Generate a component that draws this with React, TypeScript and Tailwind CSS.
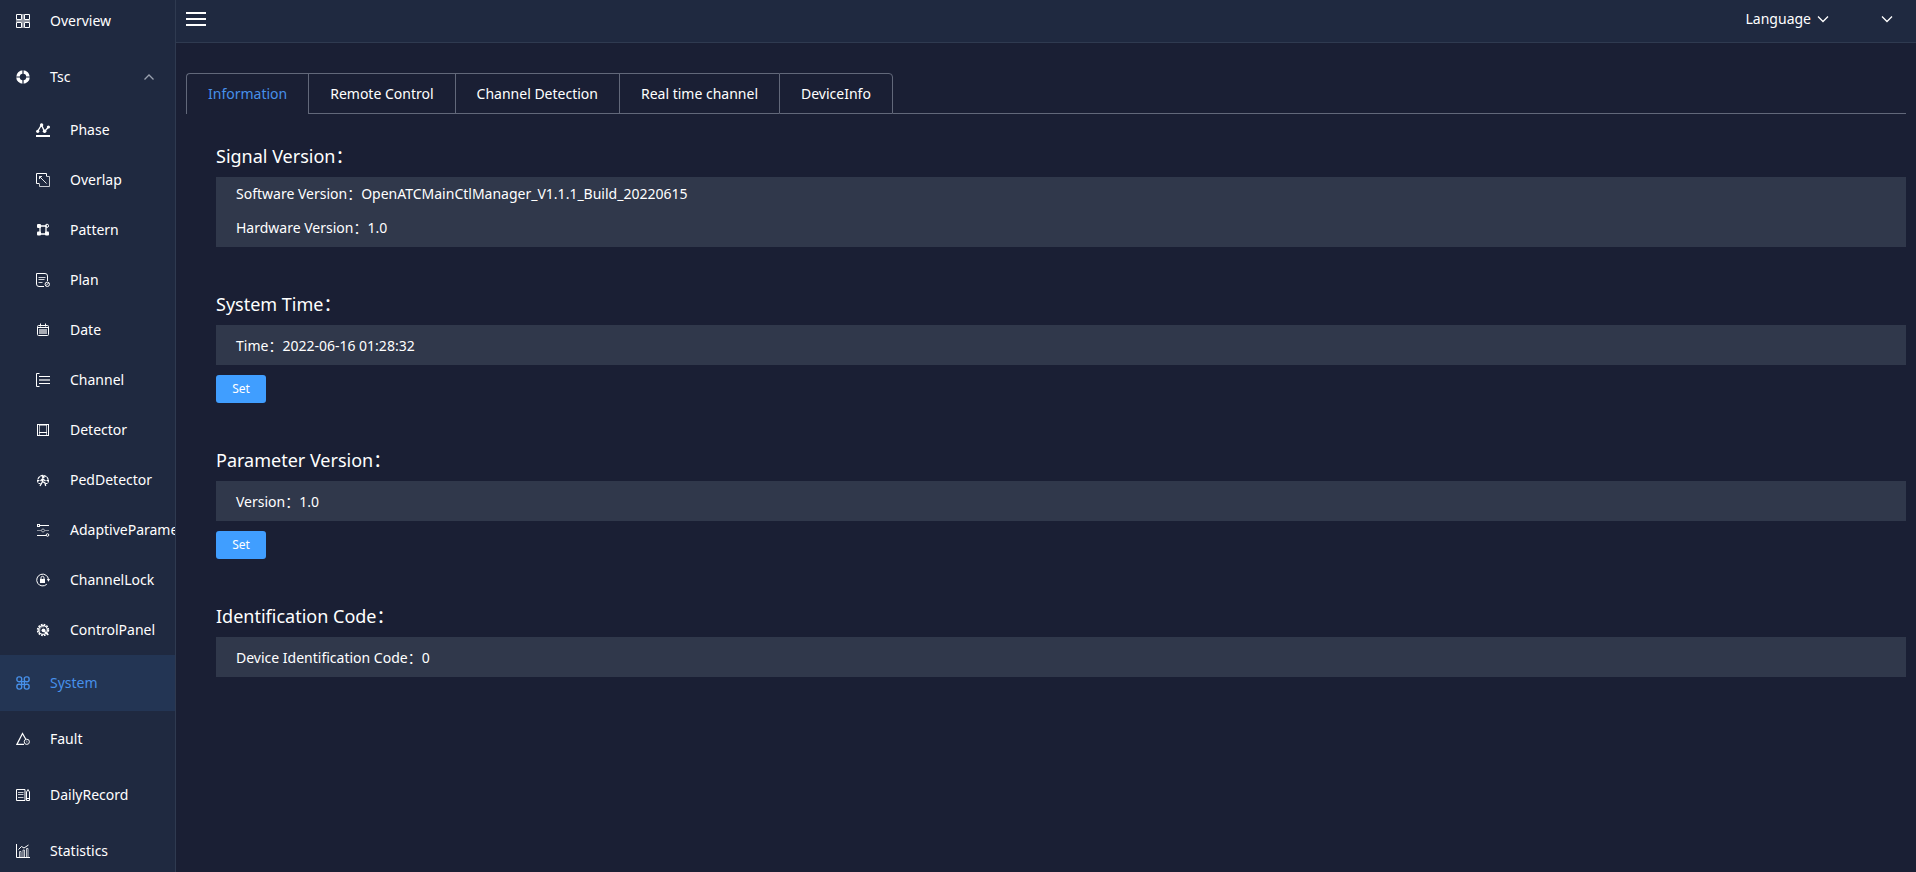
import { useState } from "react";
import type { ReactNode } from "react";
import { clsx } from "clsx";

const Icon = ({ children }: { children: ReactNode }) => (
  <svg
    viewBox="0 0 14 14"
    fill="none"
    stroke="currentColor"
    strokeWidth="1"
    className="h-[14px] w-[14px] shrink-0"
    aria-hidden="true"
  >
    {children}
  </svg>
);

const ChevronIcon = ({ up, className }: { up?: boolean; className?: string }) => (
  <svg
    viewBox="0 0 12 12"
    fill="none"
    stroke="currentColor"
    strokeWidth="1.3"
    className={clsx("h-3 w-3 shrink-0", className)}
    aria-hidden="true"
  >
    <path d={up ? "M1.5 8.5 6 4l4.5 4.5" : "M1 3.500 6 8.500l5-5"} />
  </svg>
);

const icons = {
  overview: (
    <Icon>
      <path d="M.5.5h5v5h-5zM8.500.5h5v5h-5zM.5 8.500h5v5h-5zM8.500 8.500h5v5h-5z" />
      <path d="M7 0v14M0 7h14" strokeWidth="2" opacity=".5" />
    </Icon>
  ),
  tsc: (
    <Icon>
      <circle cx="7" cy="7" r="5" strokeWidth="3.600" />
      <path d="M7 0v4M7 10v4M0 7h4M10 7h4" stroke="#1f2940" strokeWidth="1.200" />
    </Icon>
  ),
  phase: (
    <Icon>
      <path d="M0 13h14" strokeWidth="2" />
      <path d="M1.500 8.500 5.500 2l3 6.500 4-4.500" strokeWidth="1.400" />
      <g fill="currentColor" stroke="none">
        <circle cx="1.700" cy="8.300" r="1.600" />
        <circle cx="5.600" cy="2" r="1.700" />
        <circle cx="8.600" cy="8.300" r="1.800" />
        <circle cx="12.400" cy="4" r="1.600" />
      </g>
    </Icon>
  ),
  overlap: (
    <Icon>
      <path d="M3.500 10.500h-3V.5h10v3" />
      <path d="M11 3.500h2.500v10h-10V11" opacity=".75" />
      <path d="M3.500 3.500 10.500 10.500M3.500 6V3.500H6" opacity=".9" />
    </Icon>
  ),
  pattern: (
    <Icon>
      <path d="M3 3h8M3 11h8M4 3v8M10 3v8" strokeWidth="1.300" />
      <g fill="currentColor" stroke="none">
        <rect x="1" y="1" width="4" height="4" rx="1" />
        <rect x="1" y="8.500" width="4" height="4" rx="1" />
        <rect x="9" y="8.500" width="4" height="4" rx="1" />
      </g>
      <circle cx="11" cy="2.800" r="1.600" />
    </Icon>
  ),
  plan: (
    <Icon>
      <path d="M8 13.500H3A2.500 2.500 0 0 1 .5 11V.5H9A2.500 2.500 0 0 1 11.500 3v5" />
      <path d="M2.500 4.500h7M2.500 6.500h6M2.500 9.500h4" opacity=".8" />
      <circle cx="11.300" cy="11.300" r="2.200" />
      <path d="m10 12.500 2.500-2.500" />
    </Icon>
  ),
  date: (
    <Icon>
      <rect x="1.500" y="2.500" width="11" height="10" rx="1" />
      <path d="M1.500 4.500h11M4.500.5v3M9.500.5v3" />
      <rect x="3" y="6" width="8" height="5" fill="currentColor" stroke="none" opacity=".6" />
    </Icon>
  ),
  channel: (
    <Icon>
      <path d="M3.500.5h-3v13h3M3 3.500h11M3 10.500h11" />
      <path d="M3 7h11" strokeWidth="2" opacity=".6" />
    </Icon>
  ),
  detector: (
    <Icon>
      <rect x="1.500" y="1.500" width="11" height="11" />
      <path d="M3.500 1.500v11M10.500 1.500v11" opacity=".65" />
      <path d="M3 2.500h8" opacity=".5" />
      <path d="M3 9.500h8" />
    </Icon>
  ),
  pedDetector: (
    <Icon>
      <path d="M2 9.500A5.300 5.300 0 1 1 12 9.500" strokeWidth="1.200" strokeDasharray="3 .6" />
      <circle cx="7.300" cy="4" r="1.400" fill="currentColor" stroke="none" />
      <path
        d="M7 5.500 6.300 9 4 13M6.500 8.500l2.500 1.500.7 3M4.500 8 6.500 5.800 9.500 8"
        strokeWidth="1.300"
      />
      <path d="M1 7.500h2.500M10.500 7.500H13M2.500 10.500h2M9.500 10.500h2" />
    </Icon>
  ),
  adaptive: (
    <Icon>
      <path d="M4 2.500h9M1 12.500h9" />
      <path d="M1 7.500h4M9 7.500h4" opacity=".5" />
      <rect x="1.500" y="1.500" width="2" height="2" />
      <circle cx="7" cy="7.500" r="1.500" opacity=".6" />
      <circle cx="11.500" cy="12" r="1.300" />
    </Icon>
  ),
  channelLock: (
    <Icon>
      <path d="M12.500 6.500A5.900 5.900 0 1 0 10.800 11.200" />
      <path d="M10.800 6h3.200L12.500 8.800z" fill="currentColor" stroke="none" />
      <rect x="4" y="6" width="5" height="4" fill="currentColor" stroke="none" />
      <path d="M5 6V4.800a1.500 1.500 0 0 1 3 0V6" />
    </Icon>
  ),
  controlPanel: (
    <Icon>
      <circle cx="7" cy="7" r="5.400" strokeWidth="1.600" strokeDasharray="1.700 1.130" />
      <circle cx="7" cy="7" r="4.300" strokeWidth="1.200" />
      <path d="M4 8.500A3.200 3.200 0 0 1 8 4" strokeWidth="1.200" opacity=".5" />
      <circle cx="7.500" cy="7.300" r="1.900" fill="currentColor" stroke="none" />
      <path d="m8 8 4.300 4" strokeWidth="1.600" />
    </Icon>
  ),
  system: (
    <Icon>
      <g strokeWidth="1.400">
        <rect x=".9" y=".9" width="4.800" height="4.800" rx="2" />
        <rect x="8.300" y=".9" width="4.800" height="4.800" rx="2" />
        <rect x=".9" y="8.300" width="4.800" height="4.800" rx="2" />
        <rect x="8.300" y="8.300" width="4.800" height="4.800" rx="2" />
      </g>
      <path d="M5.500 4v6M8.500 4v6M4 5.500h6M4 8.500h6" />
      <path d="M7 5v4" strokeWidth="2" opacity=".4" />
    </Icon>
  ),
  fault: (
    <Icon>
      <path d="M8 12.400H.9L6.500 1.500l3.300 5.800" strokeWidth="1.200" />
      <circle cx="10.800" cy="9.800" r="2.600" />
      <path d="M10.800 8.500v2" opacity=".6" />
    </Icon>
  ),
  dailyRecord: (
    <Icon>
      <path d="M9 1.500H.5v11H9z" />
      <path d="M2 4.500h5.500M2 6.500h5.500M2 9.500h5.500" opacity=".75" />
      <path d="M10.500 12.500V4L12 1.500 13.500 4v8.500zM10.500 10.500h3" />
    </Icon>
  ),
  statistics: (
    <Icon>
      <path d="M.5 0v13.500H14" />
      <path d="M3.500 13V7.500H5V13M7 13V6h1.500v7M10.500 13V4.500H12V13" opacity=".75" />
      <path d="M2.500 5.500 5.500 2.500 8 4l4.500-3" />
    </Icon>
  ),
};

const tscLinks = [
  { name: "Phase", icon: icons.phase },
  { name: "Overlap", icon: icons.overlap },
  { name: "Pattern", icon: icons.pattern },
  { name: "Plan", icon: icons.plan },
  { name: "Date", icon: icons.date },
  { name: "Channel", icon: icons.channel },
  { name: "Detector", icon: icons.detector },
  { name: "PedDetector", icon: icons.pedDetector },
  { name: "AdaptiveParameter", icon: icons.adaptive },
  { name: "ChannelLock", icon: icons.channelLock },
  { name: "ControlPanel", icon: icons.controlPanel },
];

const bottomLinks = [
  { name: "System", icon: icons.system, active: true },
  { name: "Fault", icon: icons.fault },
  { name: "DailyRecord", icon: icons.dailyRecord },
  { name: "Statistics", icon: icons.statistics },
];

const tabs = ["Information", "Remote Control", "Channel Detection", "Real time channel", "DeviceInfo"];

const sections = [
  {
    title: "Signal Version：",
    rows: ["Software Version：OpenATCMainCtlManager_V1.1.1_Build_20220615", "Hardware Version：1.0"],
  },
  { title: "System Time：", rows: ["Time：2022-06-16 01:28:32"], action: true },
  { title: "Parameter Version：", rows: ["Version：1.0"], action: true },
  { title: "Identification Code：", rows: ["Device Identification Code：0"] },
];

type NavLinkProps = {
  name: string;
  icon: ReactNode;
  active?: boolean;
  nested?: boolean;
};

const NavLink = ({ name, icon, active, nested }: NavLinkProps) => (
  <a
    href="#"
    className={clsx(
      "flex items-center gap-5 whitespace-nowrap",
      nested ? "h-[50px] pl-9" : "h-14 pl-4",
      active ? "bg-[#233554] text-[#4790ea]" : "text-white"
    )}
  >
    {icon}
    <span>{name}</span>
  </a>
);

const Sidebar = () => {
  const [tscOpen, setTscOpen] = useState(true);

  return (
    <aside className="w-44 shrink-0 overflow-hidden border-r border-[#2f3a50] bg-[#1f2940]">
      {/* Menu is slightly scrolled */}
      <nav className="-mt-[7px]">
        <NavLink name="Overview" icon={icons.overview} />
        <button
          onClick={() => setTscOpen(!tscOpen)}
          aria-expanded={tscOpen}
          className="flex h-14 w-full items-center gap-5 pr-5 pl-4 text-white"
        >
          {icons.tsc}
          <span>Tsc</span>
          <ChevronIcon up={tscOpen} className="ml-auto text-[#9aa1af]" />
        </button>
        {tscOpen && tscLinks.map((link) => <NavLink key={link.name} {...link} nested />)}
        {bottomLinks.map((link) => (
          <NavLink key={link.name} {...link} />
        ))}
      </nav>
    </aside>
  );
};

const Header = () => (
  <header className="flex h-[43px] items-center justify-between border-b border-[#2f3a50] bg-[#1f2940] pr-5 pb-[5px] pl-[10px] text-white">
    <button aria-label="Toggle menu">
      <svg viewBox="0 0 20 14" stroke="currentColor" strokeWidth="2" className="h-[14px] w-5">
        <path d="M0 1h20M0 7h20M0 13h20" />
      </svg>
    </button>
    <div className="flex items-center gap-[52px]">
      <button className="flex items-center gap-[6px]">
        Language
        <ChevronIcon />
      </button>
      <button aria-label="User menu" className="pr-[3px]">
        <ChevronIcon />
      </button>
    </div>
  </header>
);

const App = () => {
  const [activeTab, setActiveTab] = useState("Information");

  return (
    <div className="flex h-screen overflow-hidden bg-[#1a1f34] font-['Noto_Sans','Noto_Sans_CJK_SC',sans-serif] text-sm text-white">
      <Sidebar />
      <div className="min-w-0 flex-1">
        <Header />
        <main className="px-[10px] pt-[30px]">
          <div className="flex">
            <div role="tablist" className="flex">
              {tabs.map((tab) => (
                <button
                  key={tab}
                  role="tab"
                  aria-selected={activeTab === tab}
                  onClick={() => setActiveTab(tab)}
                  className={clsx(
                    "h-[41px] border-t border-l border-[#62687a] px-[21px] whitespace-nowrap first:rounded-tl last:rounded-tr last:border-r",
                    activeTab === tab ? "text-[#4790ea]" : "border-b"
                  )}
                >
                  {tab}
                </button>
              ))}
            </div>
            <div className="flex-1 border-b border-[#62687a]" />
          </div>

          <div className="pt-[30px] pl-[30px]">
            {sections.map((section) => (
              <section key={section.title} className="mb-[45px]">
                <h2 className="mb-2 text-lg leading-[25px]">{section.title}</h2>
                <div className="bg-[#30384b] px-5 pb-[2px]">
                  {section.rows.map((row) => (
                    <p
                      key={row}
                      className={section.rows.length > 1 ? "leading-[34px]" : "pt-1 leading-[34px]"}
                    >
                      {row}
                    </p>
                  ))}
                </div>
                {section.action && (
                  <button className="mt-[10px] block h-7 w-[50px] rounded-[3px] bg-[#409eff] text-xs">
                    Set
                  </button>
                )}
              </section>
            ))}
          </div>
        </main>
      </div>
    </div>
  );
};

export default App;
